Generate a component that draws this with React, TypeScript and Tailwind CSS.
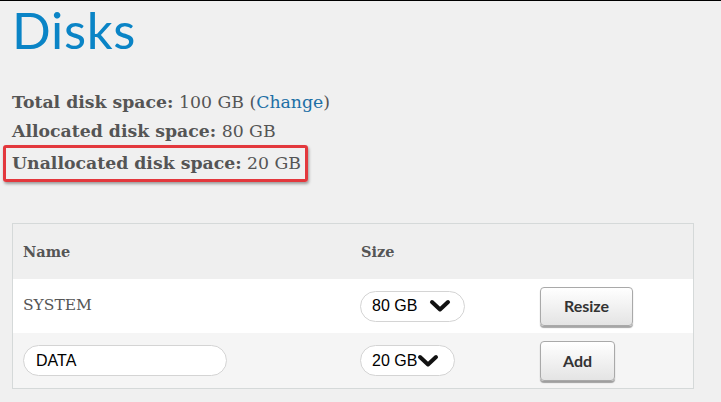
import React from "react";

const serif = { fontFamily: '"DejaVu Serif", "Liberation Serif", serif' };

const Chevron = () => (
  <svg width="22" height="14" viewBox="0 0 22 14" className="shrink-0">
    <path d="M3 3 L11 10.5 L19 3" fill="none" stroke="#111" strokeWidth="4" strokeLinejoin="round" strokeLinecap="round" />
  </svg>
);

const SizeSelect = ({ value, wide }: { value: string; wide?: boolean }) => (
  <div
    className={`flex items-center h-[31px] rounded-full border border-[#d4d4d4] bg-white pl-[11px] text-[16px] text-black ${
      wide ? "w-[105px] gap-[12px]" : "w-[95px] gap-0"
    }`}
    style={{ fontFamily: '"Liberation Sans", Arial, sans-serif' }}
  >
    <span>{value}</span>
    <Chevron />
  </div>
);

const Button = ({ label, width, height }: { label: string; width: string; height: string }) => (
  <button
    className={`${width} ${height} rounded-[4px] border border-[#a9a9a9] bg-gradient-to-b from-white to-[#e4e4e4] shadow-[0_2px_1px_rgba(0,0,0,0.35)] text-[16px] font-bold text-[#333]`}
    style={{ fontFamily: 'Lato, "Liberation Sans", sans-serif' }}
  >
    {label}
  </button>
);

export default function App() {
  return (
    <div className="min-h-[402px] w-[721px] bg-[#f0f0f0] border-t border-black overflow-hidden">
      <h1
        className="pl-[12px] text-[51px] leading-[58px] tracking-[0.7px] text-[#0a84c6]"
        style={{ fontFamily: 'Lato, "Open Sans", sans-serif' }}
      >
        Disks
      </h1>

      <div className="mt-[29px] text-[17.3px] leading-[29px] text-[#555]" style={serif}>
        <div className="pl-[12px]">
          <b>Total disk space:</b> 100 GB (<span className="text-[#1d6fa5]">Change</span>)
        </div>
        <div className="pl-[12px]">
          <b>Allocated disk space:</b> 80 GB
        </div>
        <div className="-mt-[1px] ml-[3px] w-[305px] rounded-[3px] border-[3px] border-[#e3383d] pl-[6px] leading-[31px] shadow-[1px_2px_3px_rgba(0,0,0,0.35)]">
          <b>Unallocated disk space:</b> 20 GB
        </div>
      </div>

      <div className="ml-[12px] mt-[41px] w-[682px] border border-[#d5d9d9]">
        <div className="grid grid-cols-[337px_180px_1fr] h-[55px] items-center bg-[#efefef] text-[14.5px] font-bold text-[#555]" style={serif}>
          <div className="pl-[10px]">Name</div>
          <div className="pl-[11px]">Size</div>
          <div />
        </div>
        <div className="grid grid-cols-[337px_180px_1fr] h-[54px] items-center bg-white">
          <div className="pl-[10px] text-[15.5px] text-[#555]" style={serif}>
            SYSTEM
          </div>
          <div className="pl-[10px]">
            <SizeSelect value="80 GB" wide />
          </div>
          <div className="pl-[10px]">
            <Button label="Resize" width="w-[93px]" height="h-[39px]" />
          </div>
        </div>
        <div className="grid grid-cols-[337px_180px_1fr] h-[55px] items-center bg-[#f5f5f5]">
          <div className="pl-[10px]">
            <input
              defaultValue="DATA"
              className="h-[31px] w-[204px] rounded-full border border-[#d4d4d4] bg-white pl-[12px] text-[16px] text-black outline-none"
              style={{ fontFamily: '"Liberation Sans", Arial, sans-serif' }}
            />
          </div>
          <div className="pl-[10px]">
            <SizeSelect value="20 GB" />
          </div>
          <div className="pl-[10px]">
            <Button label="Add" width="w-[75px]" height="h-[40px]" />
          </div>
        </div>
      </div>
    </div>
  );
}
